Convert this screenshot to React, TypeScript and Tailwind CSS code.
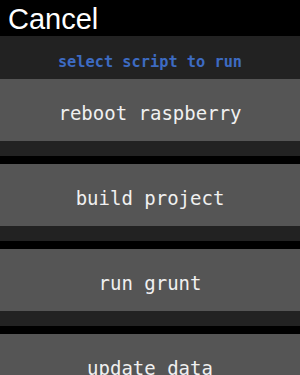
const scripts = ["reboot raspberry", "build project", "run grunt", "update data"]

export default function App() {
  return (
    <div className="w-[300px] h-[375px] overflow-hidden bg-black">
      {/* Header */}
      <div className="h-[36px] bg-black flex items-center pl-[8px] pt-[3px]">
        <span className="text-[29px] leading-none text-white font-['Liberation_Sans',sans-serif]">Cancel</span>
      </div>

      {/* Title */}
      <div className="h-[43px] bg-[#222222] flex items-center justify-center pt-[10px]">
        <span className="text-[15.3px] leading-none font-bold text-[#3d6bc2] font-['DejaVu_Sans_Mono',monospace]">
          select script to run
        </span>
      </div>

      {/* Script list */}
      <div className="flex flex-col">
        {scripts.map((s) => (
          <div key={s} className="flex flex-col">
            <button className="h-[62px] bg-[#555555] flex items-center justify-center pt-[7px] text-[19px] leading-none text-[#f0f0f0] font-['DejaVu_Sans_Mono',monospace]">
              {s}
            </button>
            <div className="h-[15px] bg-[#222222]" />
            <div className="h-[8px] bg-black" />
          </div>
        ))}
      </div>
    </div>
  )
}
